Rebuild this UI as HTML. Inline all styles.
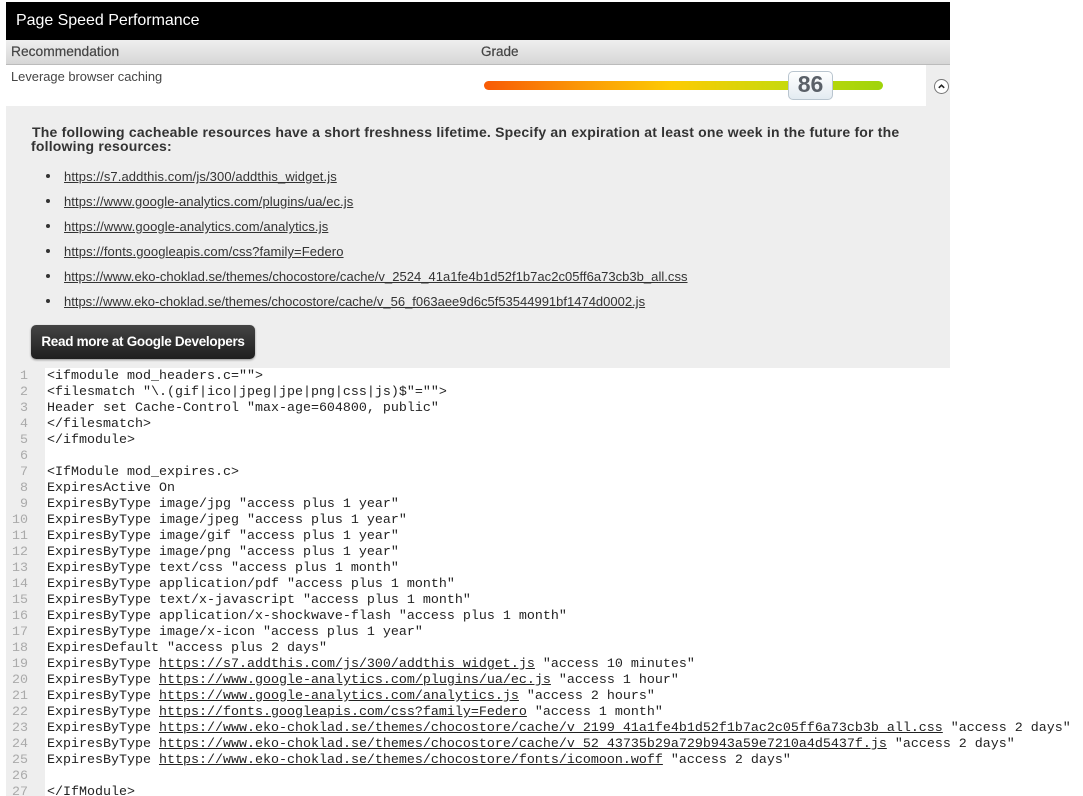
<!DOCTYPE html>
<html><head><meta charset="utf-8"><style>
html,body{margin:0;padding:0;background:#fff;width:1083px;height:796px;overflow:hidden;position:relative}
body{font-family:"Liberation Sans",sans-serif;color:#333}
div,a{position:absolute;white-space:nowrap}
#top{left:6px;top:2px;width:944px;height:38px;background:#000}
#title{left:16px;top:2px;height:38px;line-height:37px;font-size:16px;color:#fff;letter-spacing:-.03px}
#head{left:6px;top:40px;width:944px;height:25px;background:linear-gradient(#efefef,#d6d6d6);border-bottom:1px solid #bbb;box-sizing:border-box}
.h{top:40px;line-height:24px;font-size:13.8px;color:#444;font-weight:400;-webkit-text-stroke:.2px #444}
#grey{left:6px;top:65px;width:944px;height:303px;background:#eee}
#row{left:6px;top:65px;width:920px;height:41px;background:#fff}
#lev{left:11px;top:69px;font-size:12.9px;line-height:15px;color:#444}
#bar{left:484px;top:81px;width:399px;height:9px;border-radius:5px;background:linear-gradient(90deg,#f85a05 0%,#fb9a06 25%,#fdcb03 47%,#c9d90c 75%,#9fd40a 100%)}
#badge{left:788px;top:71px;width:45px;height:29px;box-sizing:border-box;border:1px solid #b9c5cf;border-radius:5px;background:linear-gradient(#fff,#e3ebf1);text-align:center;font-size:23px;font-weight:700;line-height:24px;color:#5a6068}
#tog{left:933.5px;top:79px;width:15px;height:15px}
#para{left:31px;top:125px;font-size:14px;line-height:14px;font-weight:700;color:#333;letter-spacing:.2px}
#para span{margin-left:1px}
.l{left:64px;font-size:13px;line-height:16px;color:#333;text-decoration:underline}
.b{left:46px;width:4px;height:4px;border-radius:50%;background:#333}
#btn{left:31px;top:325px;width:224px;height:34px;border-radius:5px;background:linear-gradient(#444,#1f1f1f);box-shadow:0 1px 2px rgba(0,0,0,.4);color:#fff;font-size:13.5px;font-weight:700;line-height:33px;text-align:center;letter-spacing:-.3px}
#gut{left:6px;top:368px;width:39px;height:428px;background:#eee}
.n{left:6px;width:22px;text-align:right;font:13.33px/16px "Liberation Mono",monospace;color:#aaa}
.c{left:47px;font:13.33px/16px "Liberation Mono",monospace;color:#222;white-space:pre}
.c u{text-decoration:underline}
</style></head><body>
<div id="top"></div><div id="title">Page Speed Performance</div>
<div id="head"></div><div class="h" style="left:11px">Recommendation</div><div class="h" style="left:481px;font-size:13.5px">Grade</div>
<div id="grey"></div><div id="row"></div>
<div id="lev">Leverage browser caching</div>
<div id="bar"></div><div id="badge">86</div>
<svg id="tog" style="position:absolute" viewBox="0 0 15 15"><circle cx="7.5" cy="7.5" r="7" fill="#fff" stroke="#777"/><path d="M4.8 8.8 7.5 6.2l2.7 2.6" fill="none" stroke="#222" stroke-width="1.6"/></svg>
<div id="para"><span>The following cacheable resources have a short freshness lifetime. Specify an expiration at least one week in the future for the</span><br>following resources:</div>
<div class="b" style="top:174px"></div><a class="l" style="top:169px;letter-spacing:.1px">https://s7.addthis.com/js/300/addthis_widget.js</a>
<div class="b" style="top:199px"></div><a class="l" style="top:194px;letter-spacing:.08px">https://www.google-analytics.com/plugins/ua/ec.js</a>
<div class="b" style="top:224px"></div><a class="l" style="top:219px;letter-spacing:.11px">https://www.google-analytics.com/analytics.js</a>
<div class="b" style="top:249px"></div><a class="l" style="top:244px;letter-spacing:.1px">https://fonts.googleapis.com/css?family=Federo</a>
<div class="b" style="top:274px"></div><a class="l" style="top:269px;letter-spacing:.03px">https://www.eko-choklad.se/themes/chocostore/cache/v_2524_41a1fe4b1d52f1b7ac2c05ff6a73cb3b_all.css</a>
<div class="b" style="top:299px"></div><a class="l" style="top:294px">https://www.eko-choklad.se/themes/chocostore/cache/v_56_f063aee9d6c5f53544991bf1474d0002.js</a>
<div id="btn">Read more at Google Developers</div>
<div id="gut"></div>
<div class="n" style="top:369px">1</div><div class="c" style="top:369px">&lt;ifmodule mod_headers.c=""&gt;</div>
<div class="n" style="top:385px">2</div><div class="c" style="top:385px">&lt;filesmatch "\.(gif|ico|jpeg|jpe|png|css|js)$"=""&gt;</div>
<div class="n" style="top:401px">3</div><div class="c" style="top:401px">Header set Cache-Control "max-age=604800, public"</div>
<div class="n" style="top:417px">4</div><div class="c" style="top:417px">&lt;/filesmatch&gt;</div>
<div class="n" style="top:433px">5</div><div class="c" style="top:433px">&lt;/ifmodule&gt;</div>
<div class="n" style="top:449px">6</div>
<div class="n" style="top:465px">7</div><div class="c" style="top:465px">&lt;IfModule mod_expires.c&gt;</div>
<div class="n" style="top:481px">8</div><div class="c" style="top:481px">ExpiresActive On</div>
<div class="n" style="top:497px">9</div><div class="c" style="top:497px">ExpiresByType image/jpg "access plus 1 year"</div>
<div class="n" style="top:513px">10</div><div class="c" style="top:513px">ExpiresByType image/jpeg "access plus 1 year"</div>
<div class="n" style="top:529px">11</div><div class="c" style="top:529px">ExpiresByType image/gif "access plus 1 year"</div>
<div class="n" style="top:545px">12</div><div class="c" style="top:545px">ExpiresByType image/png "access plus 1 year"</div>
<div class="n" style="top:561px">13</div><div class="c" style="top:561px">ExpiresByType text/css "access plus 1 month"</div>
<div class="n" style="top:577px">14</div><div class="c" style="top:577px">ExpiresByType application/pdf "access plus 1 month"</div>
<div class="n" style="top:593px">15</div><div class="c" style="top:593px">ExpiresByType text/x-javascript "access plus 1 month"</div>
<div class="n" style="top:609px">16</div><div class="c" style="top:609px">ExpiresByType application/x-shockwave-flash "access plus 1 month"</div>
<div class="n" style="top:625px">17</div><div class="c" style="top:625px">ExpiresByType image/x-icon "access plus 1 year"</div>
<div class="n" style="top:641px">18</div><div class="c" style="top:641px">ExpiresDefault "access plus 2 days"</div>
<div class="n" style="top:657px">19</div><div class="c" style="top:657px">ExpiresByType <u>https://s7.addthis.com/js/300/addthis_widget.js</u> "access 10 minutes"</div>
<div class="n" style="top:673px">20</div><div class="c" style="top:673px">ExpiresByType <u>https://www.google-analytics.com/plugins/ua/ec.js</u> "access 1 hour"</div>
<div class="n" style="top:689px">21</div><div class="c" style="top:689px">ExpiresByType <u>https://www.google-analytics.com/analytics.js</u> "access 2 hours"</div>
<div class="n" style="top:705px">22</div><div class="c" style="top:705px">ExpiresByType <u>https://fonts.googleapis.com/css?family=Federo</u> "access 1 month"</div>
<div class="n" style="top:721px">23</div><div class="c" style="top:721px">ExpiresByType <u>https://www.eko-choklad.se/themes/chocostore/cache/v_2199_41a1fe4b1d52f1b7ac2c05ff6a73cb3b_all.css</u> "access 2 days"</div>
<div class="n" style="top:737px">24</div><div class="c" style="top:737px">ExpiresByType <u>https://www.eko-choklad.se/themes/chocostore/cache/v_52_43735b29a729b943a59e7210a4d5437f.js</u> "access 2 days"</div>
<div class="n" style="top:753px">25</div><div class="c" style="top:753px">ExpiresByType <u>https://www.eko-choklad.se/themes/chocostore/fonts/icomoon.woff</u> "access 2 days"</div>
<div class="n" style="top:769px">26</div>
<div class="n" style="top:785px">27</div><div class="c" style="top:785px">&lt;/IfModule&gt;</div>
</body></html>
